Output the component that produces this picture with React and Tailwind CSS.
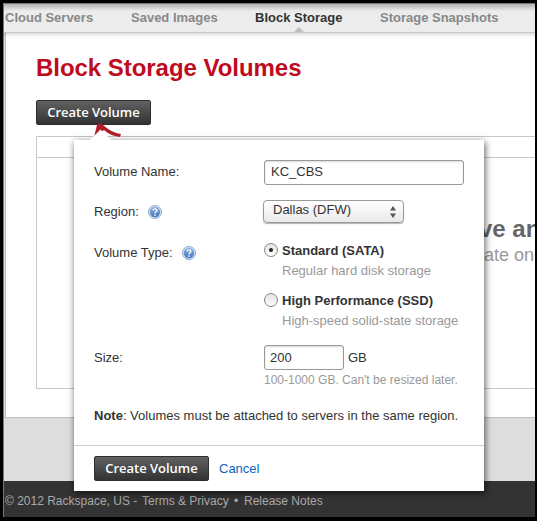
import React from 'react';

function DarkButton({ children }) {
  return (
    <button
      type="button"
      className="flex h-[25px] w-[115px] shrink-0 items-center justify-center rounded-[2px] border border-[#2d2d2d] bg-linear-to-b from-[#626262] to-[#333333] pb-px font-['Open_Sans',sans-serif] text-[13px] leading-none font-semibold tracking-[-0.02px] whitespace-nowrap text-white"
    >
      {children}
    </button>
  );
}

function HelpIcon() {
  return (
    <svg width="14" height="14" viewBox="0 0 14 14" className="shrink-0">
      <defs>
        <linearGradient id="help" x1="0" y1="0" x2="0" y2="1">
          <stop offset="0" stopColor="#8fb2df" />
          <stop offset="1" stopColor="#4676b9" />
        </linearGradient>
      </defs>
      <circle cx="7" cy="7" r="6.5" fill="#dce7f5" stroke="#7d9fce" strokeWidth="0.9" />
      <circle cx="7" cy="7" r="5.2" fill="url(#help)" />
      <path d="M5.1 5.6C5.1 3.3 8.9 3.3 8.9 5.5C8.9 6.8 7 6.8 7 8.3" fill="none" stroke="#fff" strokeWidth="1.4" />
      <circle cx="7" cy="10.1" r="0.85" fill="#fff" />
    </svg>
  );
}

function Radio({ checked }) {
  return (
    <span className="mt-px flex h-[14px] w-[14px] shrink-0 items-center justify-center rounded-full border border-[#858585] bg-linear-to-b from-[#e4e4e4] to-[#fdfdfd]">
      {checked && <span className="h-1 w-1 rounded-full bg-[#222]" />}
    </span>
  );
}

function Option({ title, text, checked }) {
  return (
    <div className="flex h-[50px] gap-1">
      <Radio checked={checked} />
      <div className="-mt-[3px] whitespace-nowrap">
        <div className="h-5 leading-[24px] font-bold">{title}</div>
        <div className="h-5 leading-[24px] text-[#999]">{text}</div>
      </div>
    </div>
  );
}

function Row({ label, help, className, children }) {
  return (
    <div className={'flex ' + className}>
      <div className="flex h-6 w-[170px] shrink-0 items-center gap-[9px] whitespace-nowrap">
        {label}
        {help && <HelpIcon />}
      </div>
      <div>{children}</div>
    </div>
  );
}

function Popover() {
  return (
    <div className="absolute top-[140px] left-[74px] h-[351px] w-[410px] bg-white text-[13px] text-[#333] shadow-[1px_2px_7px_rgba(0,0,0,0.65)]">
      <svg width="60" height="18" viewBox="0 0 60 18" className="absolute -top-[18px] left-[10px]">
        <path d="M10 15L13 3Q16 -0.5 19 3C25 8 30 11 37 12L36 15C29 14 25 12 20 8Z" fill="#b01d28" />
        <path d="M6 18L16.500 7.500L27 18Z" fill="#fff" />
      </svg>
      <div className="h-[306px] border-b border-[#ccc] px-5 pt-5">
        <Row label="Volume Name:" className="h-10">
          <div className="h-[25px] w-[200px] rounded-[3px] border border-[#999] px-[6px] leading-[22px] shadow-[inset_0_1px_2px_rgba(0,0,0,0.15)]">KC_CBS</div>
        </Row>
        <Row label="Region:" help className="h-[41px]">
          <div className="-ml-px flex h-[23px] w-[141px] items-center justify-between rounded-[4px] border border-[#999] bg-linear-to-b from-white to-[#e9e9e9] pr-[7px] pb-[3px] pl-[9px] shadow-[0_1px_1px_rgba(0,0,0,0.3)]">
            Dallas (DFW)
            <svg width="6" height="12" viewBox="0 0 6 12" className="mt-[4px]">
              <path d="M0 4.500L3 0L6 4.500ZM0 7.500L3 12L6 7.500Z" fill="#555" />
            </svg>
          </div>
        </Row>
        <Row label="Volume Type:" help className="h-[104px]">
          <div className="pt-px">
            <Option title="Standard (SATA)" text="Regular hard disk storage" checked />
            <Option title="High Performance (SSD)" text="High-speed solid-state storage" />
          </div>
        </Row>
        <Row label={<span className="pt-[2px]">Size:</span>} className="h-[61px]">
          <div className="flex gap-1 leading-[24px]">
            <div className="h-[25px] w-[80px] rounded-[3px] border border-[#999] px-[5px] leading-[23px] shadow-[inset_0_1px_2px_rgba(0,0,0,0.15)]">200</div>
            <div className="pt-px">GB</div>
          </div>
          <div className="text-[12px] leading-[20px] whitespace-nowrap text-[#999]">100-1000 GB. Can't be resized later.</div>
        </Row>
        <div className="leading-[20px] whitespace-nowrap">
          <b>Note</b>: Volumes must be attached to servers in the same region.
        </div>
      </div>
      <div className="flex h-[45px] items-center gap-[10px] px-5">
        <DarkButton>Create Volume</DarkButton>
        <a className="pt-px text-[#1062c4]">Cancel</a>
      </div>
    </div>
  );
}

export default function App() {
  return (
    <div className="relative flex h-[521px] w-[537px] flex-col overflow-hidden bg-[#ddd] font-['Liberation_Sans',Arial,sans-serif] text-[13px]">
      <nav className="relative flex h-[33px] shrink-0 border-b border-[#c6c6c6] bg-[#ececec] bg-linear-to-b from-[#aaa] from-[3px] to-[#ececec] to-[11px] pl-[5px] leading-[35px] font-bold whitespace-nowrap text-[#888] shadow-[0_1px_5px_rgba(0,0,0,0.2)]">
        <span className="w-[126px]">Cloud Servers</span>
        <span className="w-[124px]">Saved Images</span>
        <span className="w-[125px] text-[#333]">Block Storage</span>
        <span>Storage Snapshots</span>
        <svg width="10" height="5" viewBox="0 0 10 5" className="absolute top-[27px] left-[294px]">
          <path d="M0 5L5 0L10 5Z" fill="#bdbdbd" />
        </svg>
      </nav>
      <main className="ml-[5px] h-[385px] shrink-0 border-b border-l border-[#bdbdbd] bg-white pt-[20px] pl-[30px]">
        <h1 className="h-[47px] text-[24px] leading-[30px] font-bold tracking-[-0.04px] whitespace-nowrap text-[#c00a20]">Block Storage Volumes</h1>
        <DarkButton>Create Volume</DarkButton>
        <div className="mt-[11px] h-[253px] border border-r-0 border-[#c8c8c8]">
          <div className="h-[21px] border-b border-[#c8c8c8]" />
          <div className="pt-[57px] pl-[442px] whitespace-nowrap">
            <div className="h-[28px] text-[24px] leading-[28px] font-bold text-[#666]">ve an</div>
            <div className="pl-[5px] text-[18px] leading-[24px] text-[#999]">ate on</div>
          </div>
        </div>
      </main>
      <footer className="mt-[63px] flex h-[40px] shrink-0 bg-[#333] pl-[5px] text-[12px] leading-[40px] whitespace-nowrap text-[#aaa]">
        <span className="w-[137px]">© 2012 Rackspace, US -</span>
        <span className="w-[92px]">Terms &amp; Privacy</span>
        <span className="w-[10px]">•</span>
        <span>Release Notes</span>
      </footer>
      <Popover />
      <div className="pointer-events-none absolute inset-0 border-t-[3px] border-r-[2px] border-b-[4px] border-l-[3px] border-black shadow-[inset_1px_1px_0_#777]" />
    </div>
  );
}
